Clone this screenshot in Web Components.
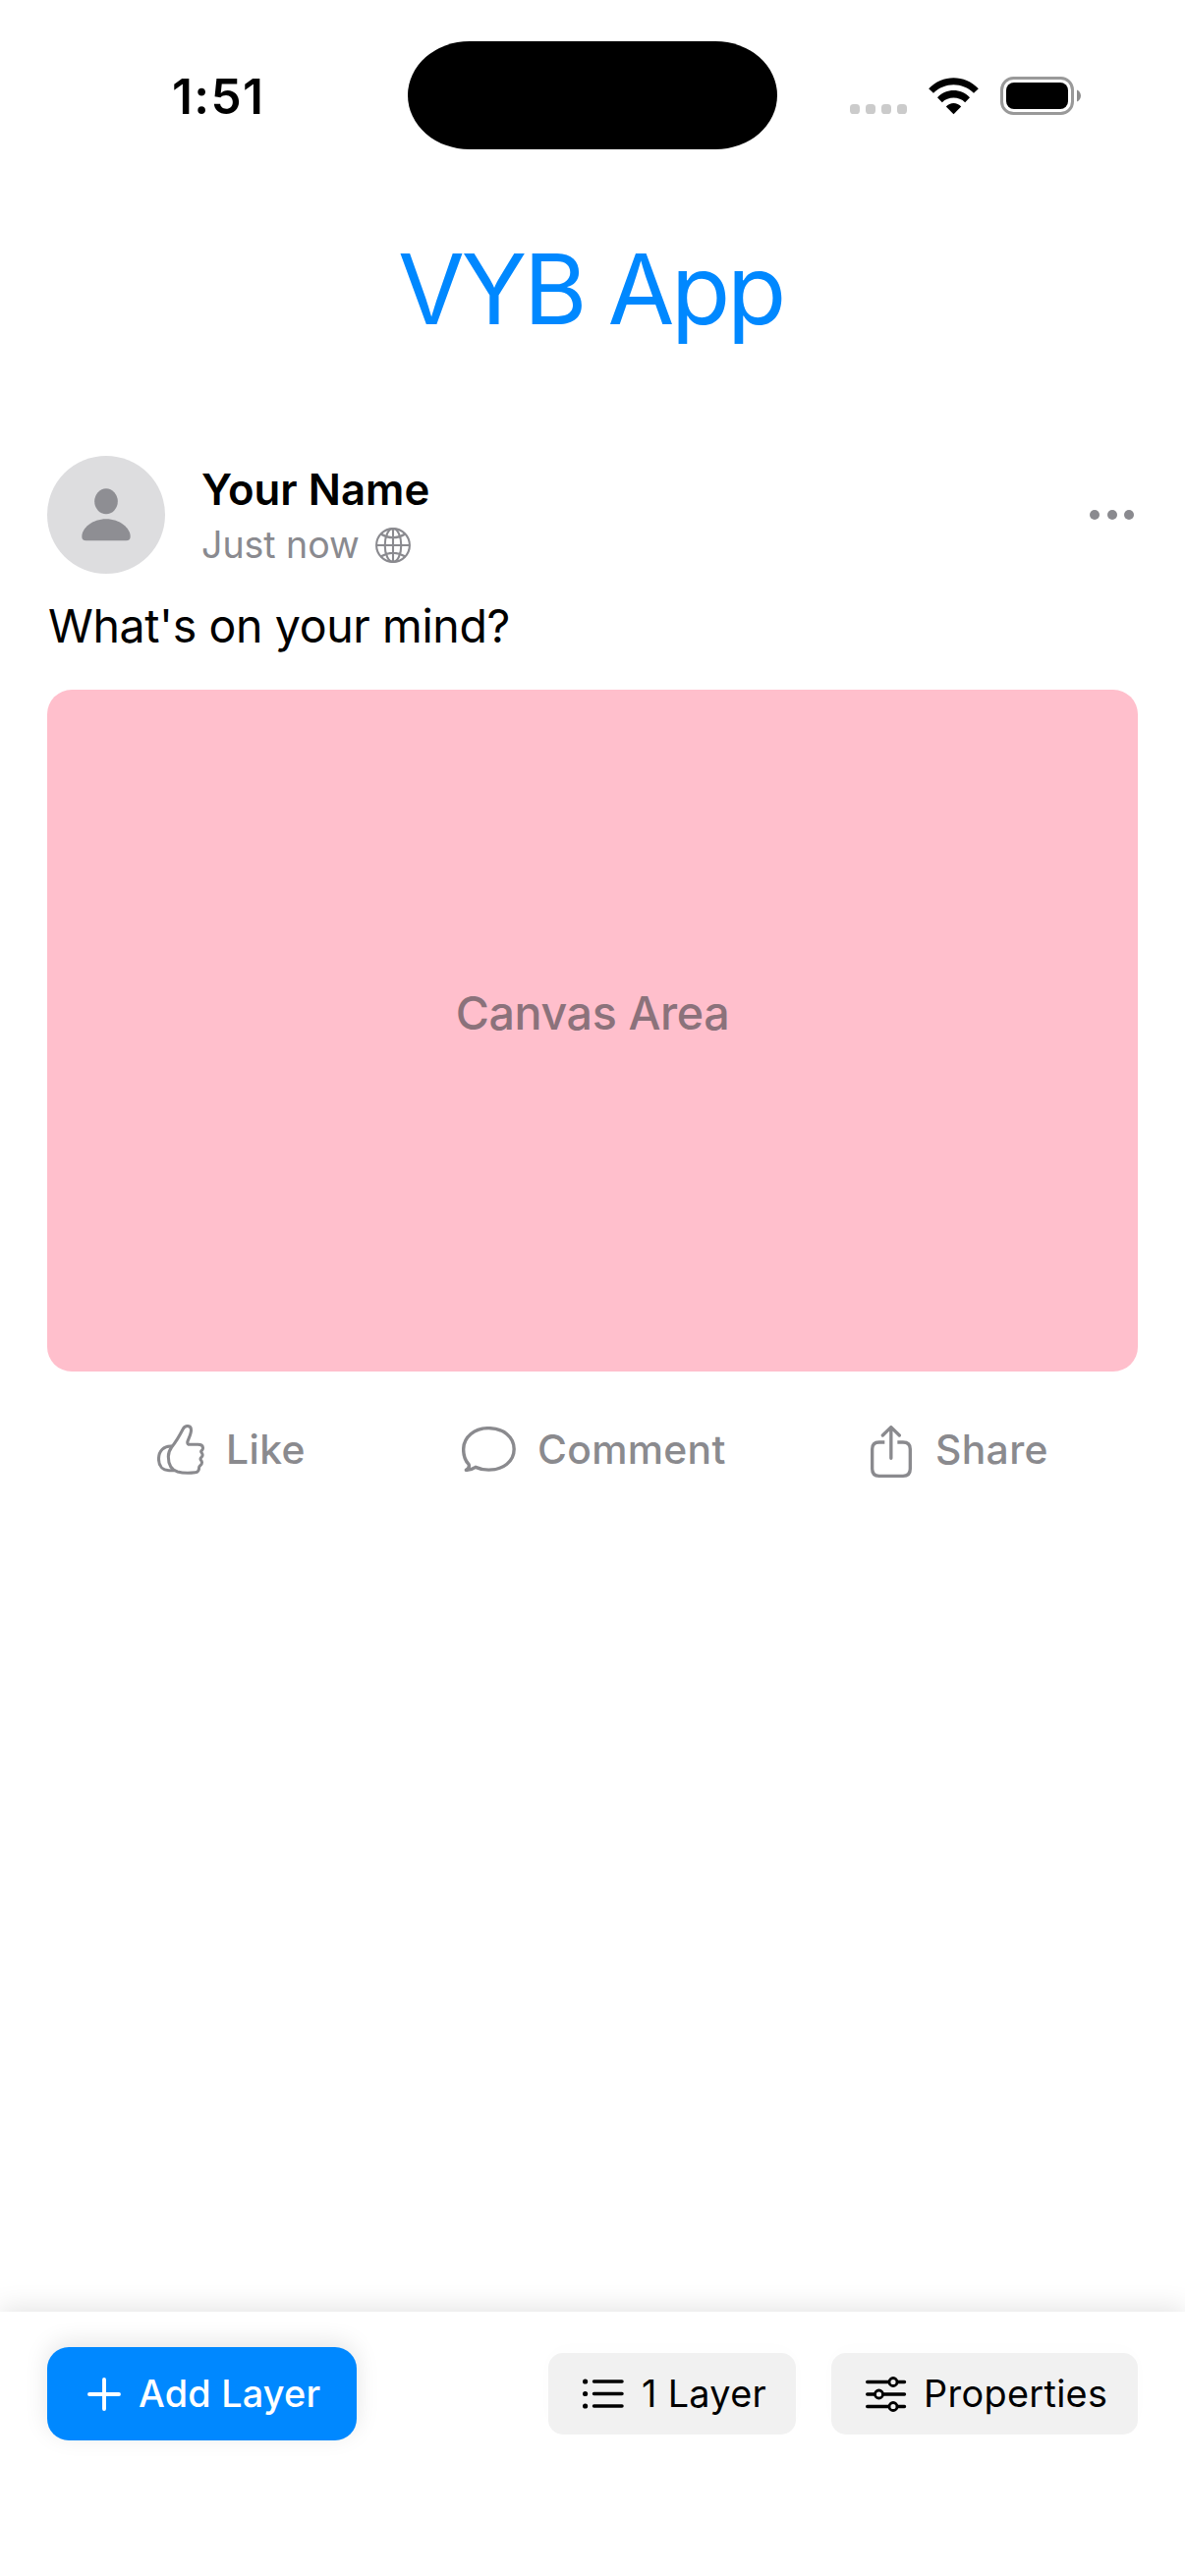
<!DOCTYPE html>
<html lang="en">
<head>
<meta charset="utf-8">
<title>VYB App</title>
<style>
html,body{margin:0;padding:0;background:#fff}
body{width:1206px;height:2622px;overflow:hidden;font-family:Inter,"Liberation Sans",sans-serif;color:#000}
</style>
</head>
<body>
<vyb-app></vyb-app>
<script>
const define = (name, html, Base = HTMLElement) => {
  const template = document.createElement('template');
  template.innerHTML = html;
  customElements.define(name, class extends Base {
    constructor() {
      super();
      this.attachShadow({ mode: 'open' }).append(template.content.cloneNode(true));
    }
  });
};

/* One line of text, tracked so that its ink is exactly `ink` pixels wide. */
customElements.define('ui-text', class extends HTMLElement {
  connectedCallback() {
    const size = parseFloat(this.getAttribute('size'));
    const weight = this.getAttribute('weight') || '400';
    const ink = parseFloat(this.getAttribute('ink'));
    const line = this.getAttribute('line') || Math.round(size * 1.25);
    const label = this.getAttribute('label');
    const ctx = document.createElement('canvas').getContext('2d');
    ctx.font = `${weight} ${size}px Inter, "Liberation Sans", sans-serif`;
    const m = ctx.measureText(label);
    const bearings = m.width - m.actualBoundingBoxRight - m.actualBoundingBoxLeft;
    const root = this.attachShadow({ mode: 'open' });
    root.innerHTML = `<style>
      :host{display:block;flex:none;width:${ink}px;white-space:nowrap;font-size:${size}px;font-weight:${weight};
        line-height:${line}px}
      span{display:inline-block;vertical-align:top;margin-left:${m.actualBoundingBoxLeft.toFixed(2)}px}
    </style><span></span>`;
    const span = root.querySelector('span');
    span.textContent = label;
    const natural = span.getBoundingClientRect().width - bearings;
    span.style.letterSpacing = ((ink - natural) / (label.length - 1)).toFixed(3) + 'px';
  }
});

define('status-bar', `<style>
  :host{display:flex;height:177px;align-items:flex-start;flex:none}
  .time{padding:68px 0 0 177px;width:237.5px}
  .island{width:376px;height:110.5px;margin-top:41.5px;background:#000;border-radius:63px/55.25px;flex:none}
  .signal{display:flex;gap:6px;margin:106px 0 0 74.5px}
  .signal i{width:10px;height:10px;border-radius:3.6px;background:#cbcbcb}
  svg{display:block;flex:none}
  .wifi{margin:79px 0 0 22px}
  .battery{margin:78px 0 0 22px}
</style>
<div class="time"><ui-text label="1:51" size="49.5" weight="600" ink="88" line="60"></ui-text></div>
<div class="island"></div>
<div class="signal"><i></i><i></i><i></i><i></i></div>
<svg class="wifi" width="51" height="37.5" viewBox="435 86 153 112.5">
  <path d="M435.500 120C477 76 546 76 587.500 120L573 133.500C539 99 484 99 450 133.500Z"/>
  <path d="M462 147C489 118 534 118 561 147L546.500 161.500C528 143 495 143 476.500 161.500Z"/>
  <path d="M488.500 174.500C500 160 523 160 534.500 174.500L511.500 198Z"/>
</svg>
<svg class="battery" width="82.500" height="39" viewBox="0 0 82.500 39">
  <rect x="1.500" y="1.500" width="72" height="36" rx="12" fill="none" stroke="#999" stroke-width="3"/>
  <rect x="6" y="6" width="63" height="27" rx="8"/>
  <path d="M78 13.500C83.300 15.500 83.300 23.500 78 25.500Z" fill="#8c8c8c"/>
</svg>`);

define('app-title', `<style>
  :host{display:flex;justify-content:center;height:287px;box-sizing:border-box;padding-top:58px;padding-right:3px;color:#08f;flex:none;
    font-optical-sizing:none}
</style><ui-text label="VYB App" size="98.5" ink="389" line="120"></ui-text>`);

define('user-avatar', `<style>
  :host{display:flex;align-items:center;justify-content:center;width:120px;height:120px;border-radius:50%;background:#dddddf;flex:none}
  svg{display:block}
</style><svg width="50" height="54" viewBox="158 173 150 162" fill="#8e8e93">
  <ellipse cx="233" cy="213" rx="35.500" ry="39"/>
  <path d="M172 333C163 333 159 329 159 320C159 294 191 266.500 233 266.500C275 266.500 307 294 307 320C307 329 303 333 294 333Z"/>
</svg>`);

define('post-header', `<style>
  :host{display:flex;align-items:center;height:120px}
  .who{margin-left:38px;flex:1;padding-top:2px}
  .name{height:60px}
  .sub{display:flex;align-items:center;gap:17px;color:#8a8a8f;height:52px}
  .more{display:flex;gap:7.5px;margin-right:4px}
  .more i{width:10px;height:10px;border-radius:50%;background:#8a8a8f}
  svg{display:block;margin-top:-1px}
</style>
<user-avatar></user-avatar>
<div class="who">
  <div class="name"><ui-text label="Your Name" size="43.7" weight="600" ink="230.5" line="60"></ui-text></div>
  <div class="sub"><ui-text label="Just now" size="37.6" ink="159" line="52"></ui-text>
    <svg width="36" height="36" viewBox="0 0 36 36" fill="none" stroke="#8a8a8f" stroke-width="2.100">
      <circle cx="18" cy="18" r="16.900"/><ellipse cx="18" cy="18" rx="8.300" ry="17"/>
      <path d="M18 1V35M1 18H35M5.500 6.500Q18 14 30.500 6.500M5.500 29.500Q18 22 30.500 29.500"/>
    </svg></div>
</div>
<div class="more"><i></i><i></i><i></i></div>`);

define('canvas-area', `<style>
  :host{display:flex;align-items:center;justify-content:center;height:694px;box-sizing:border-box;padding-bottom:36px;
    background:#ffbfcc;border-radius:25px;color:#8b727b}
</style><ui-text label="Canvas Area" size="46.6" weight="500" ink="274.500" line="60"></ui-text>`);

define('post-action', `<style>
  :host{display:flex;align-items:center;height:80px;color:#8a8a8e;flex:none}
  ::slotted(svg){display:block;flex:none;fill:none;stroke:#8a8a8e;stroke-linecap:round;stroke-linejoin:round}
</style><slot></slot>`);

define('post-actions', `<style>
  :host{display:flex;margin-top:39px}
  .like{margin-left:112px;gap:25px}
  .comment{margin-left:160px;gap:24.500px}
  .share{margin-left:147px;gap:26.500px}
</style>
<post-action class="like">
  <svg width="48" height="51" viewBox="60 210 144 153" stroke-width="9.200">
    <path d="M104 279C113 268 127 246 138 225C142 216 146 214.500 152 214.500C159 214.500 163.500 218 163.500 227C163.500 240 154 256 152.500 263C151.500 268 154 271 160 271L184 271C194 271 199.500 276 199.500 282C199.500 288 195 289 194 292C193 295 198.500 297 198.500 303C198.500 310 192 310 192 315C192 319 196.500 320 196.500 326C196.500 334 189 335 188 340C188 352 184 356 176 356.500C155 359 137 358.500 122 354C101 347 94 330 94 308C94 296 98 287 104 279Z"/>
    <path d="M105 276C80 274 64.500 291 64.500 315C64.500 337 77 350 96 350H112"/>
  </svg>
  <ui-text label="Like" size="40.800" weight="500" ink="76.500" line="60"></ui-text>
</post-action>
<post-action class="comment">
  <svg width="55" height="46" viewBox="60 66 165 138" stroke-width="10.200">
    <path d="M81 181C69 169 65 154 65 136C65 98 98 71 142 71C187 71 219.500 98 219.500 135C219.500 172 187 198.500 142 198.500C127 198.500 113 195 102 190C93 196 83 199 73 199C82 194 83 186 81 181Z"/>
  </svg>
  <ui-text label="Comment" size="40.800" weight="500" ink="189.500" line="60"></ui-text>
</post-action>
<post-action class="share">
  <svg width="42" height="53" viewBox="78 213 126 159" stroke-width="10" style="margin-top:4px">
    <path d="M121 264H104C90 264 83 272 83 285V345C83 360 90 367 104 367H177C191 367 199 360 199 345V285C199 272 191 264 177 264H160" stroke-linecap="butt"/>
    <path d="M140.500 313V219M115 243L140.500 218L166 243"/>
  </svg>
  <ui-text label="Share" size="40.800" weight="500" ink="111.500" line="60"></ui-text>
</post-action>`);

define('social-post', `<style>
  :host{display:block;padding:0 48px;flex:1}
  .text{margin:24px 0 36px 2px}
</style>
<post-header></post-header>
<div class="text"><ui-text label="What's on your mind?" size="46.500" ink="467.500" line="58"></ui-text></div>
<canvas-area></canvas-area>
<post-actions></post-actions>`);

define('tool-button', `<style>
  :host{display:flex;align-items:center;box-sizing:border-box;height:83px;border-radius:15px;background:#f1f1f1;
    box-shadow:0 -5px 24px rgba(0,0,0,.012);flex:none}
  :host([primary]){height:95px;border-radius:22px;background:#08f;color:#fff;box-shadow:0 -5px 24px rgba(0,0,0,.1)}
  ::slotted(svg){display:block;flex:none;fill:none;stroke:currentColor;stroke-linecap:round}
  ::slotted(ui-text){margin-top:-1px}
</style><slot></slot>`);

define('tool-bar', `<style>
  :host{display:flex;align-items:center;height:269px;box-sizing:border-box;padding:0 48px 102px;background:#fff;
    box-shadow:0 -5px 24px rgba(0,0,0,.1);flex:none}
  .add{width:315px;padding-left:41px;gap:18px;margin-right:195px}
  .layers{width:252px;padding-left:35px;gap:19px;margin-right:36px}
  .props{width:312px;padding-left:35px;gap:20px}
</style>
<tool-button class="add" primary>
  <svg width="34" height="34" viewBox="0 0 34 34" stroke-width="3.900"><path d="M2 17H32M17 2V32"/></svg>
  <ui-text label="Add Layer" size="37.800" weight="500" ink="184.500" line="60"></ui-text>
</tool-button>
<tool-button class="layers">
  <svg width="42" height="31" viewBox="0 0 42 31">
    <path d="M2.600 3H2.610M2.600 15.500H2.610M2.600 28H2.610" stroke-width="5.200"/>
    <path d="M11.500 3H40M11.500 15.500H40M11.500 28H40" stroke-width="3.500"/>
  </svg>
  <ui-text label="1 Layer" size="37.800" ink="125.500" line="60"></ui-text>
</tool-button>
<tool-button class="props">
  <svg width="42" height="36" viewBox="0 0 42 36" stroke-width="3.400">
    <path d="M1.700 5.500H23.500M32.500 5.500H39.500M1.700 18H9M18 18H39.500M1.700 30.500H23.500M32.500 30.500H39.500"/>
    <g stroke-width="2.800"><circle cx="28" cy="5.500" r="4"/><circle cx="13.500" cy="18" r="4"/><circle cx="28" cy="30.500" r="4"/></g>
  </svg>
  <ui-text label="Properties" size="37.800" ink="183" line="60"></ui-text>
</tool-button>`);

define('vyb-app', `<style>
  :host{display:flex;flex-direction:column;width:1206px;height:2622px;background:#fff;overflow:hidden}
</style>
<status-bar></status-bar>
<app-title></app-title>
<social-post></social-post>
<tool-bar></tool-bar>`);
</script>
</body>
</html>
